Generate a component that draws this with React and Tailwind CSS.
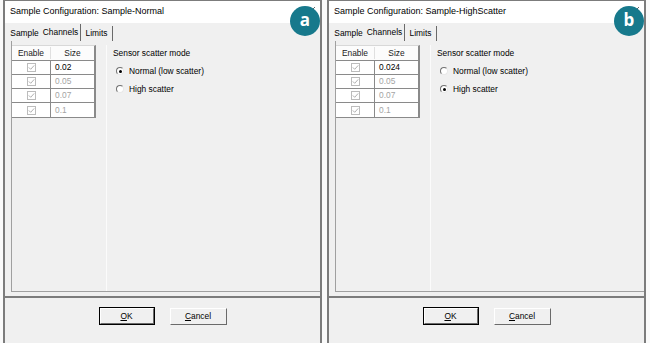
import React from 'react'

function Check() {
  return (
    <span className="flex h-[9px] w-[9px] items-center justify-center border border-[#bcbcbc] bg-white">
      <svg width="7" height="7" viewBox="0 0 7 7">
        <path d="M0.8 3.4 L2.7 5.3 L6.2 1.4" fill="none" stroke="#b0b0b0" strokeWidth="1" />
      </svg>
    </span>
  )
}

function Radio({ on }) {
  return (
    <span className="flex h-[8px] w-[8px] items-center justify-center rounded-full border border-t-[#707070] border-l-[#707070] border-r-[#e8e8e8] border-b-[#e8e8e8] bg-white">
      {on && <span className="h-[3px] w-[3px] rounded-full bg-black" />}
    </span>
  )
}

function Dialog({ title, badge, first, high }) {
  const sizes = [first, '0.05', '0.07', '0.1']

  return (
    <div className="relative flex w-[319px] flex-col border-x-2 border-t border-[#7c7c7c] bg-[#f0f0f0] text-[8.4px] text-black">
      {/* title bar */}
      <div className="flex h-[22px] items-center bg-white pl-[5px] text-[9px]">{title}</div>
      <svg className="absolute right-[4px] top-[5px]" width="8" height="8" viewBox="0 0 8 8">
        <path d="M1 1 L7 7 M7 1 L1 7" stroke="#666" strokeWidth="1" />
      </svg>
      <div className="absolute left-[285px] top-[5px] flex h-[30px] w-[30px] items-center justify-center rounded-full bg-[#17798c] pb-[2px] text-[17px] font-bold text-white font-['Open_Sans',sans-serif]">
        {badge}
      </div>

      {/* tabs */}
      <div className="flex h-[18px] items-end pl-[3px]">
        <div className="flex h-[15px] w-[33px] items-center justify-center">Sample</div>
        <div className="flex h-[17px] w-[40px] items-center justify-center border-r border-[#6a6a6a]">Channels</div>
        <div className="flex h-[15px] w-[32px] items-center justify-center border-r border-[#6a6a6a]">Limits</div>
      </div>

      {/* tab page */}
      <div className="ml-[6px] flex h-[251px] border-b border-l border-[#a0a0a0] pt-[4px]">
        <div className="w-[95px] border-r border-[#fbfbfb]">
          <div className="w-[84px] border-b border-r-2 border-t border-[#8a8a8a] border-t-[#d8d8d8] bg-white">
            <div className="flex h-[15px] items-center border-b border-[#8a8a8a] bg-[#fcfcfc] text-[#222]">
              <span className="w-[38px] text-center">Enable</span>
              <span className="flex-1 border-l border-[#e0e0e0] text-center">Size</span>
            </div>
            {sizes.map((s, i) => (
              <div key={s} className={`flex h-[14px] items-stretch ${i < 3 ? 'border-b border-[#8a8a8a]' : ''}`}>
                <span className="flex w-[38px] items-center justify-center">
                  <Check />
                </span>
                <span className={`flex flex-1 items-center border-l border-[#8a8a8a] pl-[4px] ${i === 0 ? 'text-black' : 'text-[#a4a4a4]'}`}>
                  {s}
                </span>
              </div>
            ))}
          </div>
        </div>

        <div className="flex flex-col pl-[6px]">
          <div className="flex h-[16px] items-center">Sensor scatter mode</div>
          <div className="mt-[3px] flex h-[14px] items-center gap-[5px] pl-[3px]">
            <Radio on={!high} />
            <span>Normal (low scatter)</span>
          </div>
          <div className="mt-[4px] flex h-[14px] items-center gap-[5px] pl-[3px]">
            <Radio on={high} />
            <span>High scatter</span>
          </div>
        </div>
      </div>

      {/* separator + buttons */}
      <div className="mt-[4px] h-[2px] bg-[#7c7c7c]" />
      <div className="flex h-[41px] justify-center gap-[15px] pt-[9px]">
        <div className="h-[18px] w-[56px] border border-black">
          <div className="flex h-full items-center justify-center border border-b-[#6a6a6a] border-l-white border-r-[#6a6a6a] border-t-white bg-[#f0f0f0]">
            <span className="underline decoration-[0.5px] underline-offset-[1px]">O</span>K
          </div>
        </div>
        <div className="mt-[1px] flex h-[17px] w-[57px] items-center justify-center border border-b-[#6a6a6a] border-l-white border-r-[#6a6a6a] border-t-white bg-[#f0f0f0]">
          <span className="underline decoration-[0.5px] underline-offset-[1px]">C</span>ancel
        </div>
      </div>
    </div>
  )
}

export default function App() {
  return (
    <div className="flex h-[343px] w-[650px] gap-[5px] overflow-hidden bg-[#fafafa] pl-[3px] font-['Liberation_Sans',Arial,sans-serif]">
      <Dialog title="Sample Configuration: Sample-Normal" badge="a" first="0.02" high={false} />
      <Dialog title="Sample Configuration: Sample-HighScatter" badge="b" first="0.024" high />
    </div>
  )
}
